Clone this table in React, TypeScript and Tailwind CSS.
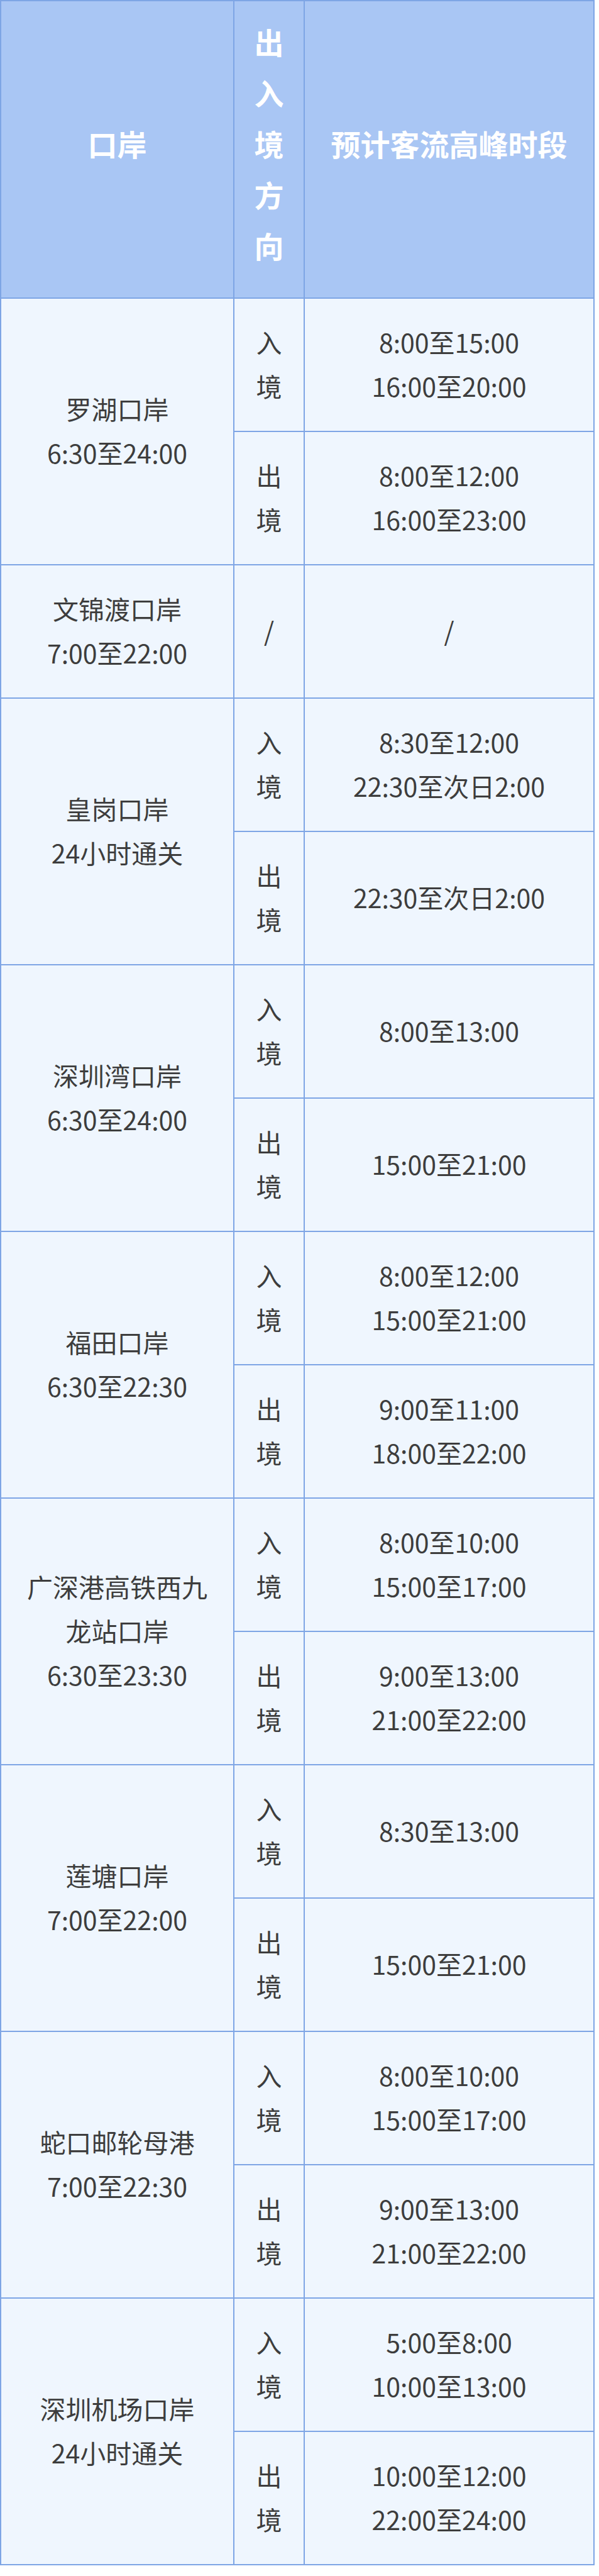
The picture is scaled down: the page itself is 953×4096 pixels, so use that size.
import React from 'react';

interface PortRow {
  name: string[];
  entry?: string[];
  exit?: string[];
}

const ports: PortRow[] = [
  { name: ['罗湖口岸', '6:30至24:00'], entry: ['8:00至15:00', '16:00至20:00'], exit: ['8:00至12:00', '16:00至23:00'] },
  { name: ['文锦渡口岸', '7:00至22:00'] },
  { name: ['皇岗口岸', '24小时通关'], entry: ['8:30至12:00', '22:30至次日2:00'], exit: ['22:30至次日2:00'] },
  { name: ['深圳湾口岸', '6:30至24:00'], entry: ['8:00至13:00'], exit: ['15:00至21:00'] },
  { name: ['福田口岸', '6:30至22:30'], entry: ['8:00至12:00', '15:00至21:00'], exit: ['9:00至11:00', '18:00至22:00'] },
  { name: ['广深港高铁西九', '龙站口岸', '6:30至23:30'], entry: ['8:00至10:00', '15:00至17:00'], exit: ['9:00至13:00', '21:00至22:00'] },
  { name: ['莲塘口岸', '7:00至22:00'], entry: ['8:30至13:00'], exit: ['15:00至21:00'] },
  { name: ['蛇口邮轮母港', '7:00至22:30'], entry: ['8:00至10:00', '15:00至17:00'], exit: ['9:00至13:00', '21:00至22:00'] },
  { name: ['深圳机场口岸', '24小时通关'], entry: ['5:00至8:00', '10:00至13:00'], exit: ['10:00至12:00', '22:00至24:00'] },
];

const cell = 'border-2 border-[#7ea5e5] text-center align-middle pb-[5px]';
const headCell = 'border-2 border-[#7ea5e5] text-center align-middle pb-[20px]';

const Lines: React.FC<{ items: string[] }> = ({ items }) => (
  <>
    {items.map((t, i) => (
      <div key={i}>{t}</div>
    ))}
  </>
);

const App: React.FC = () => {
  return (
    <div className="w-[953px] bg-white font-['Noto_Sans_CJK_SC','Noto_Sans',sans-serif]">
      <table className="w-[946px] table-fixed border-collapse text-[41px] leading-[70px] text-[#3d3d3d]">
        <colgroup>
          <col className="w-[371px]" />
          <col className="w-[112px]" />
          <col />
        </colgroup>
        <thead>
          <tr className="h-[473px] bg-[#a9c6f4] text-white font-bold text-[47px]">
            <th className={headCell}>口岸</th>
            <th className={`${headCell} leading-[81px]`}>
              <Lines items={['出', '入', '境', '方', '向']} />
            </th>
            <th className={headCell}>预计客流高峰时段</th>
          </tr>
        </thead>
        <tbody className="bg-[#eff6fe]">
          {ports.map((p, idx) =>
            p.entry && p.exit ? (
              <React.Fragment key={idx}>
                <tr className="h-[212px]">
                  <td rowSpan={2} className={cell}>
                    <Lines items={p.name} />
                  </td>
                  <td className={cell}>
                    <Lines items={['入', '境']} />
                  </td>
                  <td className={cell}>
                    <Lines items={p.entry} />
                  </td>
                </tr>
                <tr className="h-[212px]">
                  <td className={cell}>
                    <Lines items={['出', '境']} />
                  </td>
                  <td className={cell}>
                    <Lines items={p.exit} />
                  </td>
                </tr>
              </React.Fragment>
            ) : (
              <tr key={idx} className="h-[212px]">
                <td className={cell}>
                  <Lines items={p.name} />
                </td>
                <td className={cell}>/</td>
                <td className={cell}>/</td>
              </tr>
            )
          )}
        </tbody>
      </table>
    </div>
  );
};

export default App;
